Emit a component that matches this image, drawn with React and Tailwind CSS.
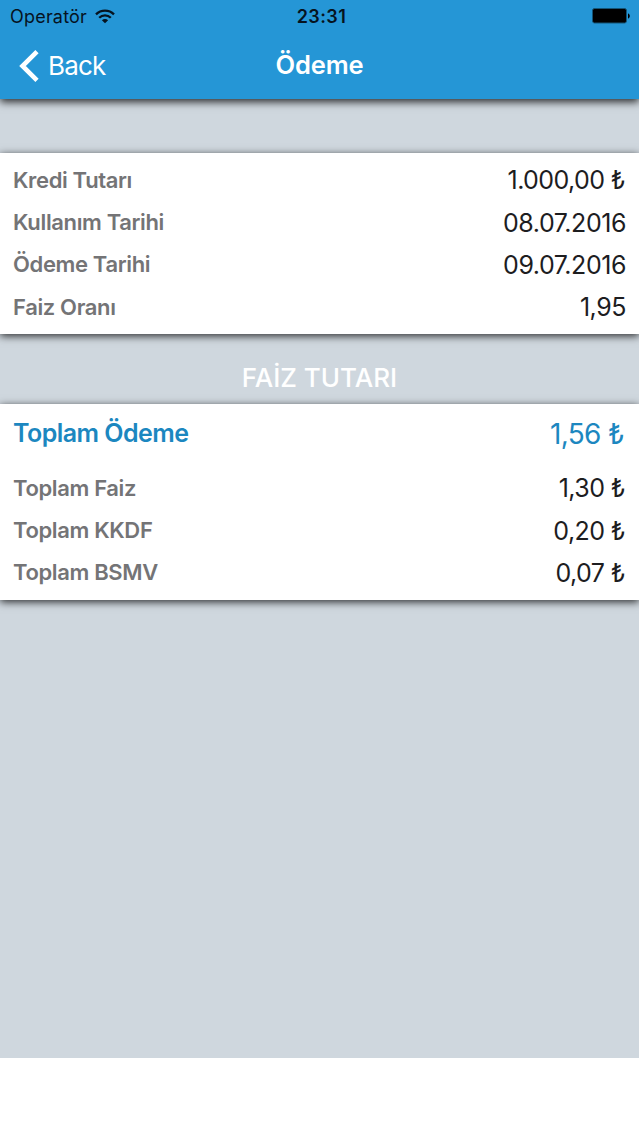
import React from 'react';

const loanRows = [
  { label: 'Kredi Tutarı', value: '1.000,00 ₺' },
  { label: 'Kullanım Tarihi', value: '08.07.2016' },
  { label: 'Ödeme Tarihi', value: '09.07.2016' },
  { label: 'Faiz Oranı', value: '1,95' },
];

const interestRows = [
  { label: 'Toplam Faiz', value: '1,30 ₺' },
  { label: 'Toplam KKDF', value: '0,20 ₺' },
  { label: 'Toplam BSMV', value: '0,07 ₺' },
];

function Row({ label, value }) {
  return (
    <div className="flex h-[42.2px] items-center justify-between">
      <span className="pt-px text-[22px] font-semibold tracking-[-0.36px] text-[#747476]">{label}</span>
      <span className={`pt-[2px] text-[25px] text-[#1d1d1f] ${value.endsWith('₺') ? 'pr-px tracking-[-0.6px]' : 'tracking-[-0.45px]'}`}>{value}</span>
    </div>
  );
}

function StatusBar() {
  return (
    <div className="grid h-8 grid-cols-3 items-center pl-[10px] pr-[9px] text-[#06131f]">
      <div className="flex items-center gap-[8px]">
        <span className="text-[18px] tracking-[0.2px]">Operatör</span>
        <svg width="20" height="15" viewBox="0 0 20 15" fill="none" stroke="currentColor" strokeWidth="2.3">
          <path d="M1 5.4C6 .3 14 .3 19 5.4" />
          <path d="M4.2 8.8c3.3-3.3 8.3-3.3 11.6 0" />
          <path d="M10 14.2 6.9 11.3c1.8-1.7 4.4-1.7 6.2 0z" fill="currentColor" stroke="none" />
        </svg>
      </div>
      <span className="pl-[3px] text-center text-[18px] font-semibold tracking-[0.4px]">23:31</span>
      <svg className="justify-self-end" width="38" height="16" viewBox="0 0 38 16">
        <rect x=".5" y=".5" width="34" height="14.5" rx="2" fill="#000" stroke="#145477" />
        <path d="M36 5.5c2.4.5 2.4 4.5 0 5z" fill="#000" />
      </svg>
    </div>
  );
}

export default function App() {
  return (
    <div className="min-h-[1136px] bg-white font-['Inter',sans-serif]">
      <div className="h-[1058px] bg-[#cfd7de]">
        <header className="h-[99px] bg-[#2596d6] shadow-[0_3px_8px_rgba(0,0,0,0.8)]">
          <StatusBar />
          <div className="grid h-[67px] grid-cols-3 items-center pl-[19px] pr-[19px] text-white">
            <button className="flex items-center gap-[9px] text-left text-[26px] tracking-[-0.8px]">
              <svg width="20" height="32" viewBox="0 0 20 32" fill="none" stroke="currentColor" strokeWidth="4.6">
                <path d="M18 1.7 3.5 16 18 30.3" />
              </svg>
              Back
            </button>
            <h1 className="pb-px text-center text-[25.5px] font-semibold tracking-[-0.1px]">Ödeme</h1>
          </div>
        </header>

        <section className="mt-[54px] h-[181px] bg-white px-[13px] pt-[6px] shadow-[0_2px_8px_rgba(0,0,0,0.8)]">
          {loanRows.map((row) => (
            <Row key={row.label} {...row} />
          ))}
        </section>

        <h2 className="flex h-[70px] items-center justify-center pt-[16px] text-[26px] font-medium text-white">FAİZ TUTARI</h2>

        <section className="h-[196px] bg-white px-[13px] shadow-[0_2px_8px_rgba(0,0,0,0.8)]">
          <div className="flex h-[63px] items-center justify-between pb-[3px] text-[#1c87c0]">
            <span className="text-[25px] font-semibold tracking-[-0.55px]">Toplam Ödeme</span>
            <span className="pr-[2px] text-[28px] tracking-[-0.65px]">1,56 ₺</span>
          </div>
          {interestRows.map((row) => (
            <Row key={row.label} {...row} />
          ))}
        </section>
      </div>
    </div>
  );
}
